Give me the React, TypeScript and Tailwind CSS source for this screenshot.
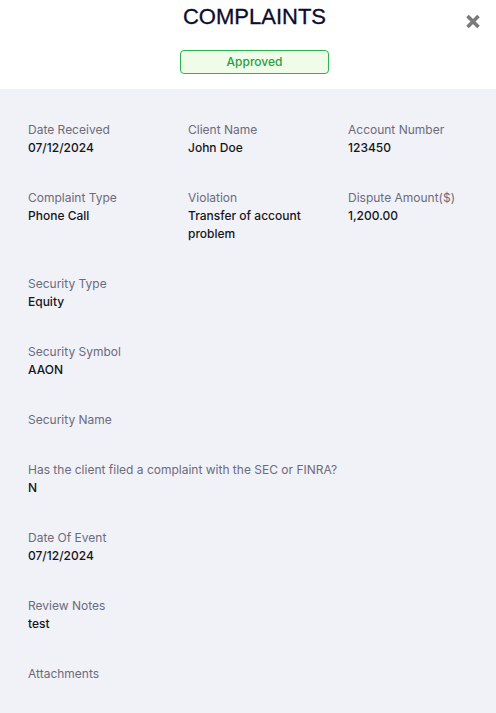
import React from "react";

function Field({ label, value }: { label: string; value?: string }) {
  return (
    <div className="flex flex-col">
      <div className="text-[12px] leading-[18px] text-[#6b6b7b]">{label}</div>
      {value ? (
        <div className="text-[12px] leading-[18px] font-medium text-[#15151a]">{value}</div>
      ) : null}
    </div>
  );
}

export default function App() {
  return (
    <div className="w-[496px] h-[713px] overflow-hidden bg-[#f1f2f7]" style={{ fontFamily: "Inter, 'Noto Sans', sans-serif" }}>
      <div className="relative bg-white flex flex-col items-center pt-[4px] pb-[15px] pl-[13px]">
        <h1
          className="text-[22px] leading-[26px] text-[#0d0d2b]"
          style={{ fontFamily: "'Liberation Sans', Arial, sans-serif", WebkitTextStroke: "0.3px #0d0d2b" }}
        >
          COMPLAINTS
        </h1>
        <div className="mt-[20px] w-[149px] h-[24px] rounded-[4px] border border-[#2bb34f] bg-[#effde8] flex items-center justify-center text-[12px] font-medium text-[#2a9d3f]">
          Approved
        </div>
        <button className="absolute right-[15px] top-[14px]">
          <svg width="16" height="15" viewBox="0 0 16 15">
            <path d="M2.5 2 L13.5 13 M13.5 2 L2.5 13" stroke="#7a7a7a" strokeWidth="3.6" strokeLinecap="butt" />
          </svg>
        </button>
      </div>
      <div className="pl-[28px] pr-[20px] pt-[32px] flex flex-col gap-[32px]">
        <div className="grid grid-cols-[160px_160px_1fr]">
          <Field label="Date Received" value="07/12/2024" />
          <Field label="Client Name" value="John Doe" />
          <Field label="Account Number" value="123450" />
        </div>
        <div className="grid grid-cols-[160px_160px_1fr]">
          <Field label="Complaint Type" value="Phone Call" />
          <div className="pr-[20px]">
            <Field label="Violation" value="Transfer of account problem" />
          </div>
          <Field label="Dispute Amount($)" value="1,200.00" />
        </div>
        <Field label="Security Type" value="Equity" />
        <Field label="Security Symbol" value="AAON" />
        <Field label="Security Name" />
        <Field label="Has the client filed a complaint with the SEC or FINRA?" value="N" />
        <Field label="Date Of Event" value="07/12/2024" />
        <Field label="Review Notes" value="test" />
        <Field label="Attachments" />
      </div>
    </div>
  );
}
